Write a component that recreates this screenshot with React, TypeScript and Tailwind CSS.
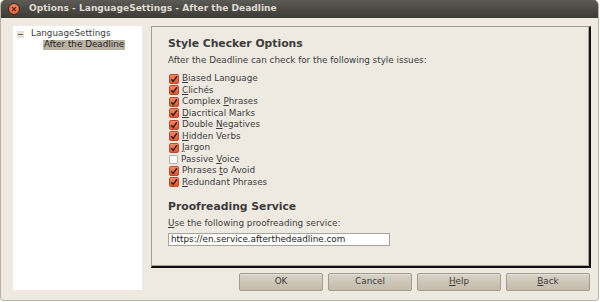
import React from "react";

const font = { fontFamily: '"DejaVu Sans", Verdana, sans-serif' };

type Opt = { pre: string; key: string; post: string; checked: boolean };

const options: Opt[] = [
  { pre: "", key: "B", post: "iased Language", checked: true },
  { pre: "", key: "C", post: "lichés", checked: true },
  { pre: "Complex ", key: "P", post: "hrases", checked: true },
  { pre: "", key: "D", post: "iacritical Marks", checked: true },
  { pre: "Double ", key: "N", post: "egatives", checked: true },
  { pre: "", key: "H", post: "idden Verbs", checked: true },
  { pre: "", key: "J", post: "argon", checked: true },
  { pre: "Passive ", key: "V", post: "oice", checked: false },
  { pre: "Phrases ", key: "t", post: "o Avoid", checked: true },
  { pre: "", key: "R", post: "edundant Phrases", checked: true },
];

function Check({ checked }: { checked: boolean }) {
  if (!checked) {
    return <span className="block h-[9px] w-[9px] rounded-[1px] border border-[#b3aea4] bg-white" />;
  }
  return (
    <svg width="10" height="10" viewBox="0 0 10 10" className="block">
      <defs>
        <linearGradient id="cb" x1="0" y1="0" x2="0" y2="1">
          <stop offset="0" stopColor="#f58a6c" />
          <stop offset="1" stopColor="#df5334" />
        </linearGradient>
      </defs>
      <rect x="0.5" y="0.5" width="9" height="9" rx="1.2" fill="url(#cb)" stroke="#bb4a2d" />
      <path d="M2.2 5.2 L4.2 7.4 L7.9 2.3" fill="none" stroke="#3b1d14" strokeWidth="1.5" />
    </svg>
  );
}

function Btn({ children }: { children: React.ReactNode }) {
  return (
    <button className="flex h-[18px] w-[84px] items-center justify-center rounded-[2px] border border-[#a39b8c] bg-gradient-to-b from-[#d9d3c8] to-[#c3bbab] text-[8.8px] text-[#3c3b37] shadow-[inset_0_1px_0_#e6e1d8]">
      {children}
    </button>
  );
}

export default function App() {
  return (
    <div className="h-[302px] w-[600px] bg-white" style={font}>
      <div className="flex h-[301px] w-[599px] flex-col overflow-hidden rounded-t-[5px] rounded-b-[4px] border-x border-b border-[#b9b3a8] bg-[#eeeae2]">
        {/* title bar */}
        <div className="flex h-[18px] shrink-0 items-center bg-gradient-to-b from-[#5c5a54] to-[#3c3b37] pl-[7px]">
          <span className="flex h-[12px] w-[12px] items-center justify-center rounded-full border border-[#3a2a22] bg-[radial-gradient(circle_at_50%_35%,#f7926b,#d9552b)]">
            <svg width="6" height="6" viewBox="0 0 6 6">
              <path d="M1 1 L5 5 M5 1 L1 5" stroke="#5a2515" strokeWidth="1.2" />
            </svg>
          </span>
          <span className="ml-[9px] text-[9.1px] font-bold text-[#dfdbd2]">
            Options - LanguageSettings - After the Deadline
          </span>
        </div>

        <div className="flex pl-[12px] pt-[8px]">
          {/* tree */}
          <div className="h-[264px] w-[129px] bg-white pt-[3px] text-[8.8px] text-[#3c3c3c]">
            <div className="flex h-[10px] items-center">
              <span className="ml-[4px] flex h-[7px] w-[7px] items-center justify-center bg-[#e4e1db]">
                <span className="block h-px w-[5px] bg-[#6a675f]" />
              </span>
              <span className="ml-[7px]">LanguageSettings</span>
            </div>
            <div className="ml-[30px] mt-px flex h-[10px] w-fit items-center bg-[#bab2a3] px-px text-[#1e1e1e]">
              After the Deadline
            </div>
          </div>

          <div className="ml-[9px] flex flex-col">
            {/* content panel */}
            <div className="h-[242px] w-[440px] border-l border-t border-r-2 border-b-2 border-l-[#a29e96] border-t-[#a29e96] border-r-[#111] border-b-[#111] pl-[16px] pt-[10px] text-[#3c3c3c] shadow-[inset_-1px_-1px_0_#a8a49c]">
              <div className="text-[10.8px] font-bold leading-[14px]">Style Checker Options</div>
              <div className="mt-[3px] text-[8.8px] leading-[12px]">
                After the Deadline can check for the following style issues:
              </div>
              <div className="mt-[7px] flex flex-col pl-px">
                {options.map((o) => (
                  <div key={o.post} className="flex h-[11.5px] items-center text-[8.8px]">
                    <Check checked={o.checked} />
                    <span className="ml-[3px]">
                      {o.pre}
                      <span className="underline underline-offset-1">{o.key}</span>
                      {o.post}
                    </span>
                  </div>
                ))}
              </div>
              <div className="mt-[12px] text-[10.8px] font-bold leading-[14px]">Proofreading Service</div>
              <div className="mt-[3px] text-[8.8px] leading-[12px]">
                <span className="underline underline-offset-1">U</span>se the following proofreading service:
              </div>
              <div className="mt-[4px] flex h-[13px] w-[222px] items-center border border-[#a7a39b] bg-white pl-[2px] text-[8.8px] text-[#222]">
                https://en.service.afterthedeadline.com
              </div>
            </div>

            {/* buttons */}
            <div className="mt-[5px] flex justify-end gap-[5px] pr-px">
              <Btn>OK</Btn>
              <Btn>Cancel</Btn>
              <Btn>
                <span className="underline underline-offset-1">H</span>elp
              </Btn>
              <Btn>
                <span className="underline underline-offset-1">B</span>ack
              </Btn>
            </div>
          </div>
        </div>
      </div>
    </div>
  );
}
